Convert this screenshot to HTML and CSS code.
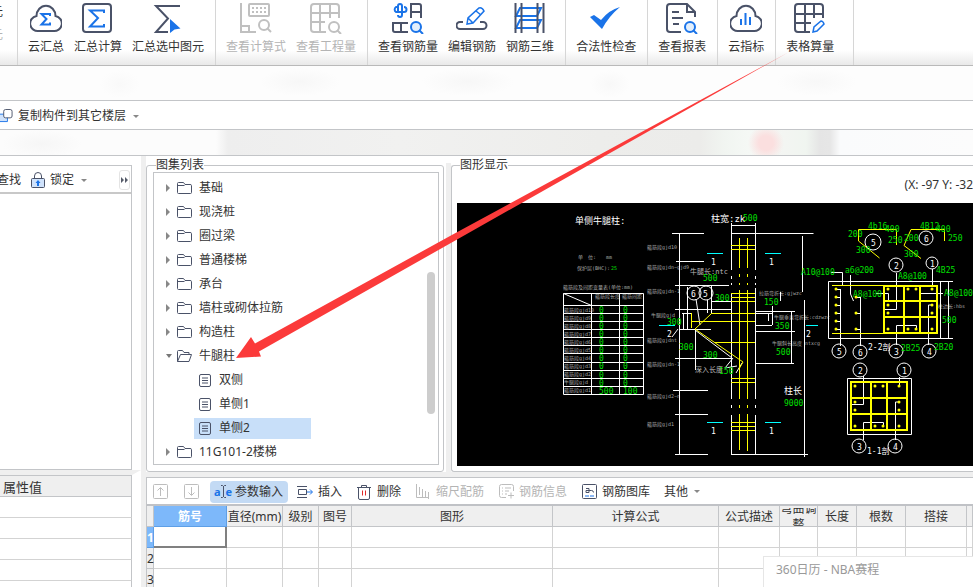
FILE: index.html
```html
<!DOCTYPE html>
<html lang="zh-CN">
<head>
  <meta charset="UTF-8">
  <title>表格算量</title>
  <meta name="viewport" content="width=device-width,initial-scale=1">
  <link rel="stylesheet" href="styles.css">
</head>
<body>
  <!-- Ribbon -->
  <header class="ribbon">
    <div class="ribbon-group cut">
      <span>元</span>
      <span class="off">元</span>
    </div>
    <div class="ribbon-group">
      <button class="tool">
        <svg class="ico" viewBox="0 0 32 32"><path d="M9 29H23a7.6 7.6 0 0 0 2.5-15 9.5 10.3 0 0 0-19 0A7.6 7.6 0 0 0 9 29z"/><path class="blue" d="M20 14V12H11.5l5 5-5 5.5H20v-2"/></svg>
        云汇总
      </button>
      <button class="tool">
        <svg class="ico" viewBox="0 0 32 32"><rect x="1" y="2" width="28" height="28" rx="3"/><path class="blue" d="M22 11V8.500H8l8 7.500-8 8.500h14V22"/></svg>
        汇总计算
      </button>
      <button class="tool">
        <svg class="ico" viewBox="0 0 32 32"><path d="M28 4H4l12 12.500L4 30h12"/><path class="fill" d="M18 17l10.500 9.500-6 1L18 31z"/></svg>
        汇总选中图元
      </button>
    </div>
    <div class="ribbon-group">
      <button class="tool" disabled>
        <svg class="ico" viewBox="0 0 32 32"><path d="M1 1v29h15M1 24h8v6"/><rect x="9" y="2" width="20" height="12" rx="1"/><path stroke-dasharray="2 2" d="M12 6h15M12 10h15"/><circle cx="24" cy="23" r="5"/><path d="M27 26l4 4"/></svg>
        查看计算式
      </button>
      <button class="tool" disabled>
        <svg class="ico" viewBox="0 0 32 32"><path d="M16 30H4a3 3 0 0 1-3-3V5a3 3 0 0 1 3-3h22a3 3 0 0 1 3 3v11M10 2v28M20 2v14M1 11h28M1 20h14"/><circle cx="24" cy="25" r="5"/><path d="M27 28l4 4"/></svg>
        查看工程量
      </button>
    </div>
    <div class="ribbon-group">
      <button class="tool">
        <svg class="ico" viewBox="0 0 32 32"><path class="blue" d="M6 11V4q0-2 2-2t2 2v9q0 2-2 2t-2-2M5 5H4a3 3 0 0 0 0 5h8a2.500 2.500 0 0 0 0-5"/><path d="M19 16V2h8a2 2 0 0 1 2 2v12M19 10h10M1 20v8a2 2 0 0 0 2 2h13M1 21h15M9 21v9"/><circle class="lens" cx="24" cy="25" r="5"/><path class="blue" d="M27 28l4 4"/></svg>
        查看钢筋量
      </button>
      <button class="tool">
        <svg class="ico" viewBox="0 0 32 32"><path d="M7 20H4a3.500 3.500 0 0 0 0 7h23a3.500 3.500 0 0 0 0-7h-3"/><path class="blue thin" d="M11 22l1-6L23 6q3-1 5 3L17 21zM12 16l5 5M20 9l5 4"/></svg>
        编辑钢筋
      </button>
      <button class="tool">
        <svg class="ico" viewBox="0 0 32 32"><path class="blue" d="M6 6h21l-4 8H2zM6 18h21l-4 8H2z"/><path d="M1.500 1v30M7.500 1v30M23.500 1v30M29.500 1v30"/></svg>
        钢筋三维
      </button>
    </div>
    <div class="ribbon-group">
      <button class="tool">
        <svg class="ico" viewBox="0 0 32 32"><path class="fill" d="M0 15l4-2 7 5Q19 8 30 5 19 14 12 27z"/></svg>
        合法性检查
      </button>
    </div>
    <div class="ribbon-group">
      <button class="tool">
        <svg class="ico" viewBox="0 0 32 32"><path d="M15 30H4a3 3 0 0 1-3-3V5a3 3 0 0 1 3-3h17l8 8v5M21 2v8h8M6 10h7M6 16h11M7 22h6"/><circle class="lens" cx="24" cy="25" r="5"/><path class="blue" d="M27 28l4 4"/></svg>
        查看报表
      </button>
    </div>
    <div class="ribbon-group">
      <button class="tool">
        <svg class="ico" viewBox="0 0 32 32"><path d="M9 29H23a7.600 7.600 0 0 0 2.500-15 9.500 10.300 0 0 0-19 0A7.600 7.600 0 0 0 9 29z"/><path class="blue" d="M11 17v6M15.500 11v12M20 15v8"/></svg>
        云指标
      </button>
    </div>
    <div class="ribbon-group last">
      <button class="tool">
        <svg class="ico" viewBox="0 0 32 32"><path d="M16 30H4a3 3 0 0 1-3-3V5a3 3 0 0 1 3-3h22a3 3 0 0 1 3 3v11M11 2v28M20 2v14M1 12h28M1 21h16"/><path class="blue thin" d="M19 30l1-5 7-6q2 0 3 3l-7 7z"/></svg>
        表格算量
      </button>
    </div>
  </header>

  <div class="strip faint"></div>
  <div class="strip copy">
    <button class="flat">
      <svg class="copy-ico" viewBox="0 0 14 16"><path fill="#cfe2fb" stroke="#1a73e8" d="M0 6h8v8H0"/><rect x="4" y="1" width="9" height="9" rx="2" fill="#fff" stroke="#4a5268"/></svg>
      复制构件到其它楼层
      <i class="caret"></i>
    </button>
  </div>
  <div class="strip haze"></div>

  <main class="work">
    <!-- Component list and its properties -->
    <aside class="side">
      <div class="side-top">
        <div class="side-bar">
          <button class="flat find">查找</button>
          <button class="flat lock">
            <svg width="14" height="16" viewBox="0 0 14 16"><path fill="none" stroke="#4a5268" d="M3.500 7V4a3.500 3.500 0 0 1 7 0v3"/><rect x=".5" y="6.500" width="13" height="9" rx="1" fill="#cfe2fb" stroke="#4a5268"/><path fill="#1a73e8" d="M7 8l2.500 3H8v3H6v-3H4.500z"/></svg>
            锁定
            <i class="caret"></i>
          </button>
          <button class="more" aria-label="更多"><svg width="8" height="6" viewBox="0 0 8 6"><path fill="#555b69" d="M0 0l3 3-3 3zM4 0l3 3-3 3z"/></svg></button>
        </div>
      </div>
      <table class="props">
        <thead><tr><th>属性值</th></tr></thead>
        <tbody>
          <tr><td></td></tr>
          <tr><td></td></tr>
          <tr><td></td></tr>
          <tr><td></td></tr>
          <tr><td></td></tr>
        </tbody>
      </table>
    </aside>

    <section class="main">
      <div class="upper">
        <fieldset class="box atlas">
          <legend>图集列表</legend>
          <ul class="tree">
            <li><i class="arr"></i><svg class="dir"><use href="#dir"/></svg>基础</li>
            <li><i class="arr"></i><svg class="dir"><use href="#dir"/></svg>现浇桩</li>
            <li><i class="arr"></i><svg class="dir"><use href="#dir"/></svg>圈过梁</li>
            <li><i class="arr"></i><svg class="dir"><use href="#dir"/></svg>普通楼梯</li>
            <li><i class="arr"></i><svg class="dir"><use href="#dir"/></svg>承台</li>
            <li><i class="arr"></i><svg class="dir"><use href="#dir"/></svg>墙柱或砌体拉筋</li>
            <li><i class="arr"></i><svg class="dir"><use href="#dir"/></svg>构造柱</li>
            <li><i class="arr open"></i><svg class="dir"><use href="#dir-open"/></svg>牛腿柱</li>
            <li class="leaf"><span><svg class="doc"><use href="#doc"/></svg>双侧</span></li>
            <li class="leaf"><span><svg class="doc"><use href="#doc"/></svg>单侧1</span></li>
            <li class="leaf"><span class="sel"><svg class="doc"><use href="#doc"/></svg>单侧2</span></li>
            <li><i class="arr"></i><svg class="dir"><use href="#dir"/></svg>11G101-2楼梯</li>
          </ul>
          <div class="thumb"></div>
        </fieldset>

        <fieldset class="box view">
          <legend>图形显示</legend>
          <div class="coords">(X: -97 Y: -32</div>
          <div class="canvas">
            <svg class="cad" width="516" height="263" viewBox="457 203 516 263">
              <!-- variable table -->
              <g class="w">
                <path d="M563.500 293.500h80v101h-80zM591.500 293.500v101M619.500 293.500v101M563.500 293.500l28 12M563.500 305.500h80M563.500 313.500h80M563.500 321.500h80M563.500 329.500h80M563.500 337.500h80M563.500 345.500h80M563.500 353.500h80M563.500 362.500h80M563.500 370.500h80M563.500 378.500h80M563.500 386.500h80"/>
              </g>
              <g class="tiny">
                <text x="578" y="259">单　位:　　mm</text>
                <text x="577" y="270">保护层(BHC):</text>
                <text x="563" y="289">箍筋段及间距变量表(单位:mm)</text>
                <text x="595" y="298">箍筋段长度</text><text x="622" y="298">箍筋间距</text>
                <text x="564" y="312">箍筋段gjd10</text><text x="564" y="320">箍筋段gjd9</text>
                <text x="564" y="328">箍筋段gjd8</text><text x="564" y="336">箍筋段gjd7</text>
                <text x="564" y="344">箍筋段gjd6</text><text x="564" y="352">箍筋段gjd5</text>
                <text x="564" y="360">箍筋段gjd4</text><text x="564" y="368">箍筋段gjd3</text>
                <text x="564" y="376">箍筋段gjd2</text><text x="564" y="384">牛腿段gjd</text>
                <text x="564" y="392">箍筋段gjd1</text>
                <text x="647" y="249">箍筋段gjd10</text><text x="647" y="269">箍筋段gjdn~gjd9</text>
                <text x="647" y="293">箍筋段gjdn-1</text><text x="651" y="317">牛腿段gjd</text>
                <text x="647" y="342">箍筋段gjdnt</text><text x="647" y="366">箍筋段gjdn-1</text>
                <text x="647" y="398">箍筋段gjd2~n</text><text x="647" y="426">箍筋段gjd1</text>
                <text x="759" y="295">拉筋弯折长:gjwzc</text>
                <text x="774" y="319">牛腿垂直弯折长:cdzwzc</text>
                <text x="772" y="345">牛腿斜长高度 ntxcg</text>
                <text x="938" y="308">柱边长:hbs</text>
              </g>
              <g class="green">
                <text class="s5" x="611" y="270">25</text>
                <text x="599" y="313">0</text><text x="623" y="313">0</text>
                <text x="599" y="321">0</text><text x="623" y="321">0</text>
                <text x="599" y="329">0</text><text x="623" y="329">0</text>
                <text x="599" y="337">0</text><text x="623" y="337">0</text>
                <text x="599" y="345">0</text><text x="623" y="345">0</text>
                <text x="599" y="353">0</text><text x="623" y="353">0</text>
                <text x="599" y="361">0</text><text x="623" y="361">0</text>
                <text x="599" y="369">0</text><text x="623" y="369">0</text>
                <text x="599" y="378">0</text><text x="623" y="378">0</text>
                <text x="599" y="386">0</text><text x="623" y="386">0</text>
                <text x="599" y="394">500</text><text x="623" y="394">100</text>
              </g>

              <!-- column elevation -->
              <g class="w">
                <path d="M731.500 223v47M755.500 223v47M731.500 276v3M755.500 276v3M731.500 283v2M755.500 283v2M731.500 293v106M755.500 288v111M731.500 405v3M755.500 405v3M731.500 415v39M755.500 415v39M731.500 225.500h24M731.500 233.500h82"/>
                <path d="M679.500 233v221M672 233.500h32M676 261.500h28M675 285.500h54M675 309.500h56M680 329.500h31M675 358.500h57M673 390.500h35M675 414.500h33M675 454.500h33M731 454.500h77"/>
                <path d="M682 313.500h9M683.500 313v16M687.500 287v42M707.500 300v13M711.500 286v27M711 301.500h20M695.500 330v40M696 299l4 26M695 330l37 28M672 337l6-8M742 363l-6 10M733 358l-8 10 12-2"/>
                <path d="M755 311.500h40M755 313.500h18M772.500 306v19M768.500 313v8M755 325.500h17M755 331.500h40M791.500 312v51M755 363.500h39M780.500 292v9M802.500 236v56M804.500 300v157"/>
                <circle cx="694" cy="293" r="7"/><circle cx="706" cy="293" r="7"/>
              </g>
              <g class="y">
                <path d="M739.500 238v30M747.500 238v30M739.500 274v3M747.500 274v3M739.500 283v2M747.500 283v2M739.500 290v109M747.500 290v109M739.500 405v3M747.500 405v3M739.500 414v36M747.500 414v37"/>
                <path d="M731 245.500h24M731 249.500h24M731 293.500h24M731 297.500h24M731 301.500h24M731 378.500h24M731 382.500h24M731 422.500h24M731 426.500h24M731 430.500h24"/>
                <path d="M711 313.500h44M691 321.500h64M715 342.500h40M691.500 313v15M711 314l-16 15 48 33-4 7"/>
              </g>
              <path class="c" d="M707 253.500h16M765 253.500h16M659 325.500h16M806 325.500h12M707 422.500h16M765 422.500h16"/>
              <g class="white">
                <text class="cn" x="575" y="224">单侧牛腿柱:</text>
                <text class="cn" x="711" y="222">柱宽:zk</text>
                <text class="cn" x="784" y="394">柱长</text>
                <text x="711" y="265">1</text><text x="769" y="265">1</text>
                <text x="711" y="434">1</text><text x="769" y="434">1</text>
                <text x="667" y="337">2</text><text x="806" y="337">2</text>
                <text x="691" y="297">6</text><text x="703" y="297">5</text>
                <text class="dim" x="690" y="274">牛腿长:ntc</text>
                <text class="dim" x="695" y="372">深入长度</text>
              </g>
              <g class="green">
                <text x="743" y="221">500</text><text x="703" y="281">500</text><text x="715" y="301">300</text>
                <text x="667" y="325">300</text><text x="679" y="350">300</text><text x="703" y="358">300</text>
                <text x="719" y="374">150</text><text x="764" y="305">150</text><text x="775" y="329">350</text>
                <text x="776" y="355">500</text><text x="784" y="406">9000</text>
              </g>

              <!-- bar shapes 5 and 6 -->
              <g class="y">
                <path d="M896.500 245v-15.500h-38v11.500l21 17M944.500 241v-11.500h-33.500l-7 16 17 13"/>
              </g>
              <!-- section 2-2 -->
              <g class="w">
                <path d="M828.500 281.500h112v57h-112zM940 281.500h13M940 338.500h13M948.500 281v57"/>
                <path d="M840.500 289v57M860.500 297v49M836 289.500h4M836 297.500h4M836 305.500h4M836 313.500h4M836 321.500h4M836 329.500h4M856 297.500h4M856 313.500h4M856 329.500h4M831 272.500h11.500v13M850.500 275v19l3 7M896.500 273v36.500h-12M932.500 269v16M876 293.500h12.500v7M943 293.500h-23M896.500 345v-19.500h20v3M928.500 345v-40h3"/>
                <circle cx="873" cy="242" r="8"/><circle cx="926" cy="238" r="7"/>
                <circle cx="896" cy="265" r="7"/><circle cx="932" cy="263" r="6"/>
                <circle cx="839" cy="351" r="7"/><circle cx="860" cy="352" r="7"/>
                <circle cx="896" cy="351" r="7"/><circle cx="929" cy="351" r="7"/>
              </g>
              <path class="y" d="M832 285.500h52M832 333.500h52"/>
              <path class="y bold" d="M884 286h53v47h-53zM904 286v47M920 286v47M884 301h53M884 317h53"/>
              <path class="y dots" d="M836 289h0M836 297h0M836 305h0M836 313h0M836 321h0M836 329h0M856 297h0M856 313h0M856 329h0M888 289h0M908 289h0M916 289h0M932 289h0M888 305h0M888 313h0M932 305h0M932 313h0M888 329h0M908 329h0M916 329h0M932 329h0"/>
              <!-- section 1-1 -->
              <g class="w">
                <path d="M847.500 378.500h64v56h-64zM863.500 376v28.500h-12M899.500 377v9M863.500 440v-17.500h20v3M895.500 440v-38h3"/>
                <circle cx="860" cy="370" r="7"/><circle cx="904" cy="370" r="7"/>
                <circle cx="859" cy="446" r="7"/><circle cx="895" cy="446" r="7"/>
              </g>
              <path class="y bold" d="M851 382h56v48h-56zM871 382v48M887 382v48M851 398h56M851 414h56"/>
              <path class="y dots" d="M855 386h0M875 386h0M883 386h0M899 386h0M855 402h0M855 410h0M899 402h0M899 410h0M855 426h0M875 426h0M883 426h0M899 426h0"/>
              <g class="white">
                <text x="871" y="246">5</text><text x="924" y="242">6</text>
                <text x="894" y="269">2</text><text x="930" y="267">1</text>
                <text x="837" y="355">5</text><text x="858" y="356">6</text>
                <text x="868" y="350">2-2剖</text>
                <text x="894" y="355">3</text><text x="927" y="355">4</text>
                <text x="858" y="374">2</text><text x="902" y="374">1</text>
                <text x="857" y="450">3</text><text x="893" y="450">4</text>
                <text x="867" y="454">1-1剖</text>
              </g>
              <g class="green">
                <text x="868" y="229">4b16</text><text x="885" y="232">400</text><text x="848" y="237">200</text>
                <text x="856" y="253">300</text><text x="888" y="243">250</text>
                <text x="920" y="229">4B12</text><text x="936" y="232">400</text><text x="904" y="241">200</text>
                <text x="904" y="257">300</text><text x="948" y="241">250</text>
                <text x="801" y="275">A10@100</text><text x="845" y="273">a6@200</text>
                <text x="898" y="279">A8@100</text><text x="936" y="273">4B25</text>
                <text x="853" y="297">A8@100</text><text x="944" y="296">A8@100</text>
                <text x="942" y="323">500</text><text x="901" y="351">2B25</text><text x="934" y="350">2B20</text>
              </g>
            </svg>
          </div>
        </fieldset>
      </div>

      <!-- Rebar table -->
      <div class="lower">
        <div class="bar">
          <button class="flat up" disabled aria-label="上移"><svg width="15" height="15" viewBox="0 0 15 15"><rect x=".5" y=".5" width="14" height="14" rx="1"/><path d="M7.500 12V4M4.500 6.500l3-3 3 3"/></svg></button>
          <button class="flat down" disabled aria-label="下移"><svg width="15" height="15" viewBox="0 0 15 15"><rect x=".5" y=".5" width="14" height="14" rx="1"/><path d="M7.500 3v8M4.500 8.500l3 3 3-3"/></svg></button>
          <button class="flat on"><span class="ae">a<svg width="5" height="13" viewBox="0 0 5 13"><path d="M0 .5h1.500l1 1 1-1H5M2.500 1v11M0 12.500h1.500l1-1 1 1H5"/></svg>e</span>参数输入</button>
          <button class="flat insert"><svg width="16" height="14" viewBox="0 0 16 14"><path d="M0 1.500h10M0 12.500h10M1.500 4.500h8v5h-8z"/><path stroke="#1a73e8" d="M10 7h5M13 4.500L15.500 7 13 9.500"/></svg>插入</button>
          <button class="flat del"><svg width="14" height="16" viewBox="0 0 14 16"><path d="M0 3.500h14M4.500 3.500v-2h5v2M1.500 4v10q0 1.500 1.500 1.500h8q1.500 0 1.500-1.500V4"/><path stroke="#e02a2a" d="M5.500 6.500v5M8.500 6.500v5"/></svg>删除</button>
          <button class="flat scale" disabled><svg width="15" height="15" viewBox="0 0 15 15"><path d="M1.500 0v13.500H14M4.500 3v8M7.500 5v9M10.500 7v7M13.500 8v7"/></svg>缩尺配筋</button>
          <button class="flat info" disabled><svg width="16" height="15" viewBox="0 0 16 15"><path d="M7 13.500H2.500q-2 0-2-2v-9q0-2 2-2h10q2 0 2 2V7M3 4h1M6 4h6M3 7h1M6 7h4M3 10h1M6 10h2M9 11.500h6M12 8.500v6"/></svg>钢筋信息</button>
          <button class="flat lib"><svg width="15" height="15" viewBox="0 0 15 15"><rect x=".5" y=".5" width="14" height="14" rx="1"/><path d="M4 4.500h3v4H4v-2h5.500q2 0 2 2"/><path stroke="#1a73e8" d="M3 12h4M8 12h4"/></svg>钢筋图库</button>
          <button class="flat other">其他<i class="caret"></i></button>
        </div>
        <table class="grid">
          <colgroup>
            <col class="c-no"><col class="c-bar"><col class="c-dia"><col class="c-lvl"><col class="c-fig"><col class="c-shape"><col class="c-calc"><col class="c-desc"><col class="c-bend"><col class="c-len"><col class="c-qty"><col class="c-lap"><col>
          </colgroup>
          <thead>
            <tr>
              <th></th><th class="hot">筋号</th><th>直径(mm)</th><th>级别</th><th>图号</th><th>图形</th><th>计算公式</th><th>公式描述</th><th><div class="wrap">弯曲调整</div></th><th>长度</th><th>根数</th><th>搭接</th><th></th>
            </tr>
          </thead>
          <tbody>
            <tr><th class="hot">1</th><td class="cur"></td><td></td><td></td><td></td><td></td><td></td><td></td><td></td><td></td><td></td><td></td><td></td></tr>
            <tr><th>2</th><td></td><td></td><td></td><td></td><td></td><td></td><td></td><td></td><td></td><td></td><td></td><td></td></tr>
            <tr><th>3</th><td></td><td></td><td></td><td></td><td></td><td></td><td></td><td></td><td></td><td></td><td></td><td></td></tr>
          </tbody>
        </table>
      </div>
    </section>
  </main>

  <div class="toast">360日历 - NBA赛程</div>

  <!-- Pointer from the ribbon button to the tree node -->
  <svg class="pointer" width="973" height="587" viewBox="0 0 973 587">
    <defs>
      <linearGradient id="tail" gradientUnits="userSpaceOnUse" x1="789" y1="52" x2="740" y2="79">
        <stop offset="0" stop-color="#fb3a3a" stop-opacity=".7"/>
        <stop offset="1" stop-color="#fb3a3a"/>
      </linearGradient>
    </defs>
    <path fill="url(#tail)" d="M236 358l15-21 4 6.500L450 236 789 52 450 243.500 259 351.500l2 5z"/>
  </svg>

  <svg class="defs">
    <symbol id="dir" viewBox="0 0 15 13"><path d="M.5 3V1.500q0-1 1-1h5l1.500 2h5q1.500 0 1.500 1v7q0 1-1 1h-12q-1 0-1-1zM.500 3.500h7"/></symbol>
    <symbol id="dir-open" viewBox="0 0 15 13"><path d="M.5 11.500v-10q0-1 1-1h4l1.500 2h5v2M.500 11.500l3-7h11l-2.500 7z"/></symbol>
    <symbol id="doc" viewBox="0 0 12 13"><rect x=".5" y=".5" width="11" height="12" rx="1.500"/><path d="M3 4h6M3 6.500h6M3 9h6"/></symbol>
  </svg>
</body>
</html>
```
FILE: styles.css
```css
:root {
  --ink: #333;
  --icon: #4a5268;
  --blue: #1a73e8;
  --line: #c3c5c8;
  --grid: #d3d3d3;
  --gray: #efefef;
  --hot: #7db8fa;
}
* { box-sizing: border-box; margin: 0; padding: 0; }
body {
  font: 12px/16px "Noto Sans", "Noto Sans CJK SC", sans-serif;
  color: var(--ink); background: #fff;
  height: 100vh; overflow: hidden;
  display: flex; flex-direction: column;
}
button {
  font: inherit; color: inherit;
  background: none; border: none; white-space: nowrap;
}
.flat { display: flex; align-items: center; }
.caret {
  border: 3px solid transparent; border-top-color: #888;
  border-bottom: none;
}

/* ribbon */
.ribbon {
  display: flex; flex: none; height: 66px; overflow: hidden;
  border-bottom: 1px solid #b9b9b9;
  background: linear-gradient(#fff 50px, #e9e9e9);
}
.ribbon-group {
  display: flex; flex: none; padding: 0 6px 0 5px;
  border-right: 1px solid #d6d6d6;
}
.ribbon-group.last { padding-right: 14px; }
.ribbon-group.cut {
  width: 18px; padding: 4px 14px 0 0; overflow: hidden;
  flex-direction: column; align-items: flex-end; gap: 7px;
}
.cut .off { color: #b4b4b4; }
.tool {
  display: flex; flex-direction: column; align-items: center;
  gap: 5px; padding: 2px 5px 0;
}
.tool:disabled { color: #b4b4b4; }
.ico {
  width: 32px; height: 32px;
  fill: none; stroke: var(--icon); stroke-width: 2;
}
.ico .blue { stroke: var(--blue); }
.ico .thin { stroke-width: 1.5; }
.ico .fill { fill: var(--blue); stroke: none; }
.ico .lens { fill: #e3effc; stroke: var(--blue); }
.tool:disabled .ico { stroke: #c0c0c0; }

/* strips under the ribbon */
.strip { flex: none; border-bottom: 1px solid var(--line); }
.faint {
  height: 35px;
  background:
    radial-gradient(20px 14px at 120px 18px, #f9f9f9, transparent),
    radial-gradient(40px 14px at 300px 16px, #f7f7f7, transparent),
    radial-gradient(46px 14px at 468px 16px, #f7f7f7, transparent),
    radial-gradient(20px 14px at 610px 18px, #f8f8f8, transparent),
    radial-gradient(40px 14px at 817px 16px, #f8f8f8, transparent),
    #fdfdfd;
}
.copy { height: 29px; padding-top: 2px; display: flex; align-items: center; }
.copy .flat { gap: 5px; }
.copy .caret { margin-left: 2px; }
.copy-ico { width: 13px; height: 16px; fill: none; }
.haze {
  height: 26px;
  background:
    radial-gradient(40px 14px at 42px 14px, #f6f6f6, transparent),
    radial-gradient(18px 18px at 766px 13px, #fbdfdf 40%, transparent),
    linear-gradient(90deg, #fcfcfc 216px, #eee 228px, #f1f1f0 400px, #ededeb 600px, #ececea 700px, #f1f5f1 725px, #f5f8f5 748px, #f3f5f2 785px, #f0f5f0 806px, #e5e5e5 820px, #e6e6e6 830px, #fafbfc 840px, #fcfcfc);
}

/* work area */
.work { display: flex; flex: 1; min-height: 0; }
.side {
  flex: none; width: 146px; padding-top: 9px;
  border-right: 5px solid var(--gray); overflow: hidden;
}
.side-top {
  height: 305px; margin-right: 9px;
  border: 1px solid var(--line); border-left: none;
}
.side-bar {
  display: flex; align-items: center; height: 28px; padding-top: 2px;
  border-bottom: 2px solid #c8c8c8;
}
.find { width: 21px; justify-content: flex-end; }
.lock { gap: 5px; margin-left: 10px; }
.lock .caret { margin-left: 2px; }
.more {
  width: 11px; height: 20px; margin: 0 1px 0 auto;
  border: 1px solid #e4e4e4; border-radius: 3px;
  display: flex; align-items: center; justify-content: center;
}
.props {
  width: 100%; border-collapse: separate; border-spacing: 0;
  border-top: 5px solid var(--gray); border-right: 9px solid #fff;
}
.props th {
  height: 22px; padding: 2px 0 0 3px;
  font-size: 13px; font-weight: normal; text-align: left;
  background: var(--gray);
  border: 1px solid var(--line); border-left: none;
}
.props td {
  height: 21px; border-bottom: 1px solid var(--grid);
  border-right: 1px solid var(--line);
}
.main { flex: 1; min-width: 0; display: flex; flex-direction: column; }
.upper { display: flex; flex: none; padding-top: 2px; }
.box {
  border: 1px solid var(--line); border-radius: 3px;
  min-width: 0; position: relative;
}
.box legend { line-height: 14px; margin-left: 3px; }
.atlas {
  flex: none; width: 298px; padding: 0 4px 6px 6px;
}
.tree {
  list-style: none; padding: 3px 0 0 12px;
  border: 1px solid var(--line);
}
.tree li { display: flex; align-items: center; height: 24px; }
.arr {
  width: 4px; margin-right: 7px;
  border: 4px solid transparent; border-left-color: #888;
  border-right: none;
}
.arr.open {
  width: 6px; margin-right: 5px;
  border: 3px solid transparent; border-top: 4px solid #777; border-bottom: none;
}
.dir, .doc {
  flex: none; width: 15px; height: 13px; margin-right: 7px;
  fill: none; stroke: var(--icon);
}
.doc { width: 12px; margin-right: 8px; }
.tree .leaf { padding-left: 28px; }
.leaf span {
  display: flex; align-items: center;
  width: 117px; height: 21px; padding-left: 5px;
}
.leaf .sel { background: #c8dff9; }
.thumb {
  position: absolute; right: 8px; top: 100px;
  width: 8px; height: 142px; border-radius: 4px; background: #cdcdcd;
}
.view {
  flex: 1; padding: 0 0 5px 5px; margin-left: 7px;
  border-right: none; border-radius: 3px 0 0 3px;
}
.view::before {
  content: ""; position: absolute; left: -6px; top: -9px; bottom: -1px;
  width: 5px; background: var(--gray);
}
.view legend { position: relative; }
.coords {
  height: 31px; padding-top: 5px;
  display: flex; justify-content: flex-end; white-space: nowrap;
}
.canvas { background: #000; overflow: hidden; }

/* drawing */
.cad { display: block; font-family: "DejaVu Sans Mono", "Noto Sans CJK SC", monospace; font-size: 8px; }
.cad .w { fill: none; stroke: #fff; }
.cad .y { fill: none; stroke: #ff0; }
.cad .c { fill: none; stroke: #0ff; }
.cad .bold { stroke-width: 2; }
.cad .dots { stroke-width: 3; stroke-linecap: round; }
.cad .white { fill: #fff; }
.cad .green { fill: #00e000; }
.cad .tiny { fill: #a8a8a8; font-size: 5px; }
.cad .s5 { font-size: 5px; }
.cad .cn { font-size: 9px; }
.cad .dim { fill: #b8b8b8; font-size: 7px; }

/* rebar table */
.lower { border-top: 5px solid var(--gray); overflow: hidden; }
.bar {
  display: flex; align-items: center; height: 29px; padding: 1px 0 0 6px;
  border: 1px solid var(--line); border-right: none; border-bottom: 2px solid #c0c2c6;
}
.bar svg { fill: none; stroke: var(--icon); }
.bar .flat { flex: none; gap: 6px; }
.bar .flat:disabled { color: #b4b4b4; }
.bar .flat:disabled svg { stroke: #bdbdbd; }
.bar .down { margin-left: 16px; }
.bar .on {
  height: 22px; padding: 0 5px; margin: 0 9px 0 11px; gap: 4px;
  background: #c3daf4; border-radius: 4px;
}
.ae {
  display: flex; align-items: center; justify-content: center; width: 16px;
  color: var(--blue); font-size: 11px; font-weight: bold; line-height: 12px;
}
.ae svg { flex: none; }
.bar .insert { gap: 5px; }
.bar .del { margin-left: 15px; }
.bar .scale { margin-left: 14px; }
.bar .info { margin-left: 15px; gap: 4px; }
.bar .lib { margin-left: 15px; gap: 5px; }
.bar .other { margin-left: 14px; }
.grid {
  table-layout: fixed; width: 100%;
  border-collapse: separate; border-spacing: 0;
  border-left: 1px solid var(--line);
}
.grid th, .grid td {
  height: 21px; border-right: 1px solid var(--grid);
  border-bottom: 1px solid var(--grid);
}
.grid th {
  padding-top: 2px; font-weight: normal; line-height: 16px; white-space: nowrap;
  background: var(--gray); border-color: var(--line);
}
.grid .hot { background: var(--hot); color: #fff; font-weight: bold; border-color: #5e9fe6; }
.grid .cur { border-right: 2px solid #808080; border-bottom: 2px solid #808080; }
.wrap {
  height: 18px; overflow: hidden; white-space: normal;
  display: flex; align-items: center; justify-content: center;
}
.c-no { width: 7px; }
.c-bar { width: 73px; }
.c-dia { width: 56px; }
.c-lvl { width: 36px; }
.c-fig { width: 33px; }
.c-shape { width: 201px; }
.c-calc { width: 166px; }
.c-desc { width: 61px; }
.c-bend { width: 38px; }
.c-len { width: 39px; }
.c-qty { width: 49px; }
.c-lap { width: 61px; }

.toast {
  position: fixed; right: 0; bottom: 0;
  width: 210px; height: 31px; padding: 5px 12px;
  color: #999; background: #fff;
  border: 1px solid #e6e6e6; border-right: none; border-bottom: none;
}
.pointer { position: absolute; left: 0; top: 0; pointer-events: none; }
.defs { display: none; }
```
